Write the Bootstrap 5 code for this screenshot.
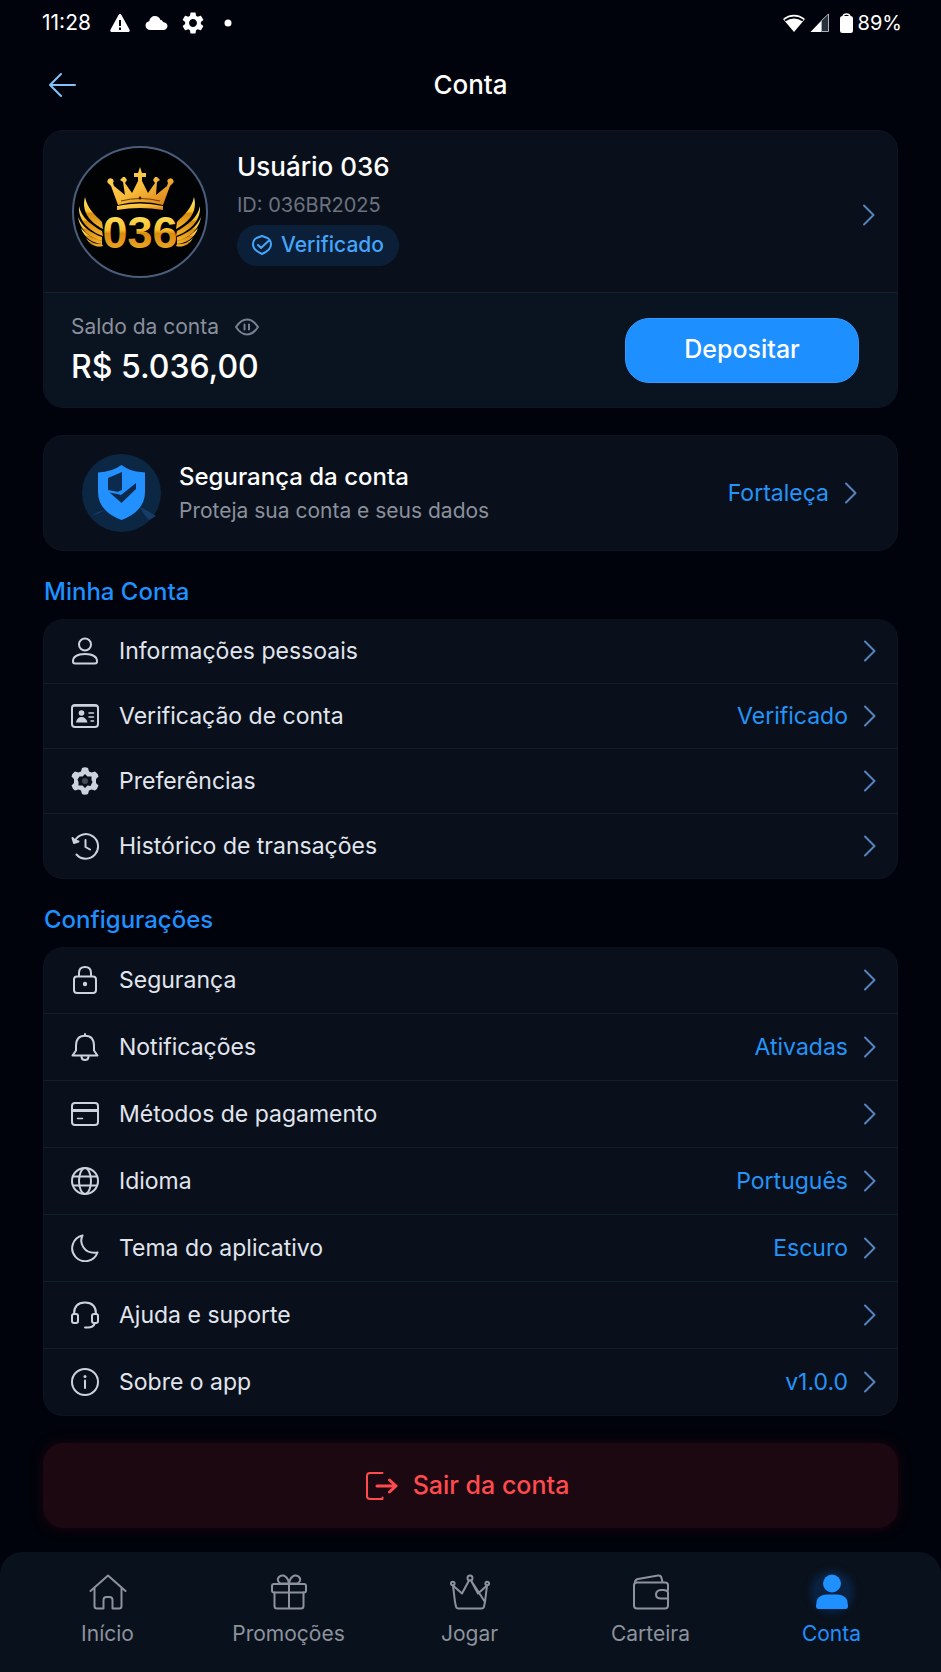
<!DOCTYPE html>
<html lang="pt-BR" data-bs-theme="dark">
<head>
    <meta charset="UTF-8">
    <meta name="viewport" content="width=device-width, initial-scale=1.0">
    <title>Conta</title>
    <link rel="stylesheet" href="https://cdn.jsdelivr.net/npm/bootstrap@5.3.0/dist/css/bootstrap.min.css">
    <style>
        :root {
            --app-bg: #00030b;
            --app-card: #09101b;
            --app-card-alt: #0a1420;
            --app-line: #131e2b;
            --app-blue: #1e90ff;
            --app-text: #e1e5ee;
            --app-muted: #8b909c;
        }

        body {
            background: var(--app-bg);
            color: #fff;
            font-family: Inter, "Liberation Sans", sans-serif;
            font-size: 23px;
            line-height: 28px;
        }

        svg {
            display: block;
            flex-shrink: 0;
        }

        .line-icon {
            fill: none;
            stroke: currentColor;
            stroke-width: 2;
            stroke-linecap: round;
            stroke-linejoin: round;
        }

        .status-bar {
            height: 44px;
            padding: 2px 39px 0 42px;
            font-size: 21px;
        }

        .status-icons {
            gap: 14px;
            margin-left: 18px;
        }

        .status-dot {
            margin-left: 6px;
        }

        .battery-text {
            font-size: 20px;
            margin-left: 5px;
        }

        .battery-icon {
            margin-left: 10px;
        }

        .top-bar {
            display: grid;
            grid-template-columns: 1fr auto 1fr;
            height: 80px;
            padding: 2px 46px 0;
        }

        .back-link {
            color: #82c4f8;
            justify-self: start;
        }

        .screen-title {
            font-size: 26px;
            font-weight: 500;
        }

        .app-main {
            padding: 6px 43px 24px;
        }

        .panel {
            background: var(--app-card);
            border: 1px solid #0c1521;
            border-radius: 20px;
            overflow: hidden;
        }

        .profile-row {
            color: #fff;
            padding: 15px 22px 14px 28px;
            border-bottom: 1px solid #15212e;
        }

        .profile-row .chevron {
            margin-top: 6px;
        }

        .profile-info {
            margin: 5px 0 0 29px;
        }

        .item-title {
            font-size: 24px;
            font-weight: 500;
            line-height: 32px;
        }

        .profile-info .item-title {
            font-size: 26px;
        }

        .user-id {
            color: #6c7280;
            font-size: 20px;
            margin: 8px 0 6px;
        }

        .verified-pill {
            background: #0b2038;
            color: #44a5fb;
            border-radius: 21px;
            padding: 6px 15px 7px;
            font-weight: 500;
            font-size: 21px;
            gap: 9px;
        }

        .balance-row {
            background: var(--app-card-alt);
            padding: 20px 38px 20px 27px;
        }

        .soft-text {
            color: var(--app-muted);
            font-size: 21px;
        }

        .balance-value {
            font-size: 32px;
            font-weight: 500;
            line-height: 40px;
            margin-top: 6px;
        }

        .eye-btn {
            background: none;
            border: 0;
            padding: 0;
            color: #77808f;
        }

        .deposit-btn {
            --bs-btn-bg: #1e8fff;
            --bs-btn-border-color: #2f9bff;
            --bs-btn-color: #fff;
            --bs-btn-hover-bg: #3a9eff;
            --bs-btn-hover-color: #fff;
            --bs-btn-border-radius: 24px;
            --bs-btn-font-size: 25px;
            --bs-btn-font-weight: 500;
            min-width: 234px;
            min-height: 65px;
        }

        .security-card {
            color: #fff;
            margin-top: 27px;
            padding: 18px 40px 18px 38px;
        }

        .security-text {
            margin-left: 18px;
        }

        .blue-text {
            color: #2494f8;
        }

        .chevron {
            color: #5683bd;
            width: 13px;
            height: 22px;
        }

        .section-title {
            color: var(--app-blue);
            font-size: 24px;
            font-weight: 500;
            line-height: 30px;
            margin: 26px 0 12px 1px;
        }

        .menu-list {
            --bs-list-group-bg: var(--app-card);
            --bs-list-group-border-color: var(--app-line);
            --bs-list-group-border-radius: 20px;
        }

        .menu-list .list-group-item {
            display: flex;
            align-items: center;
            min-height: 65px;
            padding: 0 21px 0 27px;
            border-width: 0 1px 1px;
            border-left-color: #0c1521;
            border-right-color: #0c1521;
        }

        .menu-list .list-group-item:hover {
            background: #0d1724;
        }

        .menu-list .list-group-item:last-child {
            border-bottom-color: #0c1521;
        }

        .menu-list.roomy .list-group-item {
            min-height: 67px;
        }

        .menu-icon {
            color: #cdd2df;
        }

        .menu-label {
            color: var(--app-text);
            margin-left: 20px;
        }

        .row-end {
            gap: 15px;
        }

        .logout-btn {
            --bs-btn-bg: #1b0810;
            --bs-btn-border-color: #1b0810;
            --bs-btn-color: #ff4b4f;
            --bs-btn-hover-bg: #270b14;
            --bs-btn-hover-color: #ff4b4f;
            --bs-btn-border-radius: 20px;
            --bs-btn-font-size: 25px;
            --bs-btn-font-weight: 500;
            min-height: 85px;
            margin-top: 27px;
            padding-right: 19px;
            gap: 15px;
            box-shadow: 0 0 12px rgba(60, 8, 20, .5);
        }

        .tab-bar {
            background: #09111c;
            border-radius: 22px 22px 0 0;
            padding: 22px 19px 24px 17px;
        }

        .tab-link {
            display: flex;
            flex-direction: column;
            align-items: center;
            gap: 10px;
            color: #8d929d;
            font-size: 21px;
            text-decoration: none;
        }

        .tab-link.active {
            color: var(--app-blue);
        }

        .tab-link.active svg {
            overflow: visible;
            border-radius: 50%;
            background: #0a2240;
            box-shadow: 0 0 6px 4px #0a2240;
        }
    </style>
</head>
<body>
    <svg width="0" height="0" class="position-absolute" aria-hidden="true">
        <symbol id="i-chevron" viewBox="0 0 13 22">
            <path d="M2 1.500L11.500 11L2 20.500"/>
        </symbol>
        <symbol id="i-gear" viewBox="0 0 24 24">
            <path fill-rule="evenodd" d="M19.140 12.940c.04-.3.06-.61.06-.94 0-.32-.02-.64-.07-.94l2.030-1.580c.18-.14.23-.41.12-.61l-1.920-3.320c-.12-.22-.37-.29-.59-.22l-2.390.96c-.5-.38-1.030-.7-1.620-.94l-.36-2.540c-.04-.24-.24-.41-.48-.41h-3.840c-.24 0-.43.17-.47.41l-.36 2.540c-.59.24-1.130.57-1.620.94l-2.390-.96c-.22-.08-.47 0-.59.22L2.740 8.870c-.12.21-.08.47.12.61l2.030 1.580c-.05.3-.09.63-.09.94s.02.64.07.94l-2.030 1.580c-.18.14-.23.41-.12.61l1.920 3.320c.12.22.37.29.59.22l2.390-.96c.5.38 1.030.7 1.620.94l.36 2.540c.05.24.24.41.48.41h3.840c.24 0 .44-.17.47-.41l.36-2.540c.59-.24 1.130-.56 1.620-.94l2.390.96c.22.08.47 0 .59-.22l1.920-3.320c.12-.22.07-.47-.12-.61l-2.010-1.580zM12 15.600c-1.980 0-3.600-1.620-3.600-3.600s1.620-3.600 3.600-3.600 3.600 1.620 3.600 3.600-1.620 3.600-3.600 3.600z"/>
        </symbol>
    </svg>

    <div class="d-flex flex-column min-vh-100">
        <div class="status-bar d-flex align-items-center justify-content-between">
            <div class="d-flex align-items-center">
                <span>11:28</span>
                <div class="status-icons d-flex align-items-center">
                    <svg width="22" height="20" viewBox="0 0 22 20" fill="#fff">
                        <path fill-rule="evenodd" d="M11 1Q12 1 12.600 2.200L20.700 17Q21 19 19.500 19H2.500Q1 19 1.300 17L9.400 2.200Q10 1 11 1ZM10 7V13H12V7ZM10 14.500V17H12V14.500Z"/>
                    </svg>
                    <svg width="23" height="16" viewBox="0 0 23 16" fill="#fff">
                        <path d="M5.500 15C2.500 15 .5 13 .5 10.500C.5 8 2.300 6.500 4.200 6.200C4.800 3 7 1 9.800 1C12.600 1 14.500 2.600 15.500 5C16.300 5 17.500 5.300 18 7C20.500 7.200 22.500 8.700 22.500 11C22.500 13.300 20.800 15 18.500 15Z"/>
                    </svg>
                    <svg width="22" height="22" viewBox="2 2 20 20" fill="#fff"><use href="#i-gear" width="24" height="24"/></svg>
                    <svg class="status-dot" width="8" height="8" viewBox="0 0 8 8" fill="#fff"><circle cx="4" cy="4" r="3.500"/></svg>
                </div>
            </div>
            <div class="d-flex align-items-center">
                <svg width="24" height="20" viewBox="0 0 24 20" fill="#fff">
                    <path d="M1 6C7 .3 17 .3 23 6L12 19Z"/>
                    <path d="M3 7.500C8.500 3.500 15.500 3.500 21 7.500" fill="none" stroke="#00030b" stroke-width="2"/>
                </svg>
                <svg class="ms-1" width="20" height="20" viewBox="0 0 20 20" fill="#fff">
                    <path d="M.5 19L11.500 7.500V19Z"/>
                    <path d="M11.500 7.500L18.500 1V18.500H11.500Z" fill="#28303b" stroke="#aab0b8" stroke-width="1"/>
                </svg>
                <svg class="battery-icon" width="13" height="20" viewBox="0 0 13 20" fill="#fff">
                    <rect x="0" y="3" width="13" height="17" rx="2.500"/>
                    <path d="M3 3.500Q3.500 1 6.500 1T10 3.500" fill="none" stroke="#fff" stroke-width="1.500"/>
                </svg>
                <span class="battery-text">89%</span>
            </div>
        </div>

        <header class="top-bar align-items-center">
            <a href="#" class="back-link" aria-label="Voltar">
                <svg class="line-icon" width="32" height="28" viewBox="0 0 32 28">
                    <path d="M4 14H29M15 3L4 14L15 25"/>
                </svg>
            </a>
            <h1 class="screen-title m-0">Conta</h1>
        </header>

        <main class="app-main">
            <section class="panel">
                <a href="#" class="profile-row d-flex align-items-center text-decoration-none">
                    <svg width="136" height="132" viewBox="0 0 136 132" role="img" aria-label="Logo 036">
                        <defs>
                            <linearGradient id="gold" x1="0" y1="0" x2="0" y2="1">
                                <stop offset="0" stop-color="#fff07a"/>
                                <stop offset=".45" stop-color="#f8c02a"/>
                                <stop offset=".52" stop-color="#d98a12"/>
                                <stop offset="1" stop-color="#f4b62b"/>
                            </linearGradient>
                            <linearGradient id="crownGold" x1="0" y1="0" x2="1" y2="1">
                                <stop offset="0" stop-color="#ffd85a"/>
                                <stop offset=".5" stop-color="#f9bd3b"/>
                                <stop offset="1" stop-color="#d87a16"/>
                            </linearGradient>
                            <g id="wing" fill="url(#gold)">
                                <path d="M13 51C15 62 23 69 30 76L31 83C18 76 9 66 13 51Z"/>
                                <path d="M7 60C9 71 19 79 30 85L31 90C17 85 6 75 7 60Z"/>
                                <path d="M6 71C10 81 19 87 30 91L30 95C18 92 8 84 6 71Z"/>
                                <path d="M9 82C15 89 21 92 30 95L30 98C21 97 12 92 9 82Z"/>
                                <path d="M14 92C19 97 24 98 30 98L31 100C25 102 18 99 14 92Z"/>
                            </g>
                        </defs>
                        <ellipse cx="68" cy="66" rx="67" ry="65" fill="#010204" stroke="#4a5d7a" stroke-width="2"/>
                        <path fill="url(#crownGold)" d="M46 59L39 40L37 38A3 3 0 1 1 41 37L42 40L53 49L51 36L48 34L51 31L53 31L55 34L53 37L60 47L66 35L66 31L62 31L62 27L66 27L68 21L70 27L74 27L74 31L70 31L70 35L76 47L83 37L81 34L83 31L85 31L88 34L85 36L84 49L95 40L96 37A3 3 0 1 1 100 38L98 40L91 59Q68 53 46 59Z"/>
                        <path fill="url(#crownGold)" d="M45 60Q68 55 91 60V64Q68 60 45 64Z"/>
                        <path d="M49 55Q68 50 88 55" fill="none" stroke="#6e3c07" stroke-width="1"/>
                        <path d="M68 50L69.500 52L68 54L66.500 52Z" fill="#2a1804"/>
                        <use href="#wing"/>
                        <use href="#wing" transform="translate(135 0) scale(-1 1)"/>
                        <text x="68" y="102" text-anchor="middle" fill="url(#gold)" font-family="Liberation Sans, sans-serif" font-weight="700" font-size="45">036</text>
                    </svg>
                    <div class="profile-info align-self-start">
                        <div class="item-title">Usuário 036</div>
                        <div class="user-id">ID: 036BR2025</div>
                        <span class="verified-pill d-inline-flex align-items-center">
                            <svg class="line-icon" width="20" height="22" viewBox="0 0 20 22">
                                <path d="M10 2L15.500 4Q19 6 19 10.500Q19 16 10 20Q1 16 1 10.500Q1 6 4.500 4ZM6 11L9 14L17 6.500"/>
                            </svg>
                            Verificado
                        </span>
                    </div>
                    <svg class="chevron line-icon ms-auto"><use href="#i-chevron"/></svg>
                </a>
                <div class="balance-row d-flex align-items-center justify-content-between">
                    <div>
                        <div class="d-flex align-items-center gap-3">
                            <span class="soft-text">Saldo da conta</span>
                            <button type="button" class="eye-btn" aria-label="Ocultar saldo">
                                <svg class="line-icon" width="24" height="18" viewBox="0 0 24 18">
                                    <path d="M1 9Q6 1.500 12 1.500T23 9Q18 16.500 12 16.500T1 9ZM9.500 6.500V11.500M14 6.500V11.500"/>
                                </svg>
                            </button>
                        </div>
                        <div class="balance-value">R$ 5.036,00</div>
                    </div>
                    <button type="button" class="btn deposit-btn">Depositar</button>
                </div>
            </section>

            <a href="#" class="panel security-card d-flex align-items-center text-decoration-none">
                <svg width="79" height="78" viewBox="0 0 79 78">
                    <ellipse cx="39.500" cy="39" rx="39.500" ry="39" fill="#0c2744"/>
                    <path d="M10 62Q15 57 24 56M58 53Q68 58 74 62L67 66Q61 60 58 53Z" fill="#153d68"/>
                    <path d="M39.500 11Q49 18 59 18L63 18.500V38Q63 57 39.500 66Q16 57 16 38V18.500Q30 18 39.500 11Z" fill="#2291ff"/>
                    <path d="M26 24L40 18V38L36 40L26 37Z" fill="#0b2a4d"/>
                    <path d="M27 38L39 41L54 29V35L39.500 49Z" fill="#0b2a4d"/>
                    <path d="M26 37L36 39L40 37" fill="none" stroke="#2291ff" stroke-width="2"/>
                </svg>
                <div class="security-text">
                    <div class="item-title">Segurança da conta</div>
                    <div class="soft-text mt-1">Proteja sua conta e seus dados</div>
                </div>
                <div class="row-end d-flex align-items-center ms-auto blue-text">
                    Fortaleça
                    <svg class="chevron line-icon"><use href="#i-chevron"/></svg>
                </div>
            </a>

            <h2 class="section-title">Minha Conta</h2>
            <div class="list-group menu-list">
                <a href="#" class="list-group-item">
                    <svg class="menu-icon line-icon" width="28" height="28" viewBox="0 0 28 28"><circle cx="14" cy="7.500" r="6"/><path d="M2 24.500Q2 17 14 17T26 24.500Q26 26.500 24 26.500H4Q2 26.500 2 24.500Z"/></svg>
                    <span class="menu-label">Informações pessoais</span>
                    <svg class="chevron line-icon ms-auto"><use href="#i-chevron"/></svg>
                </a>
                <a href="#" class="list-group-item">
                    <svg class="menu-icon line-icon" width="28" height="28" viewBox="0 0 28 28"><rect x="1" y="3" width="26" height="22" rx="3"/><path d="M2 4H26M18 11H22.500M18 15H22.500M20 19H22.500" stroke-width="1.500"/><circle cx="10.500" cy="11" r="2.800" fill="currentColor" stroke="none"/><path d="M5 20.500Q6 15 10.500 15T16.500 20.500Z" fill="currentColor" stroke="none"/></svg>
                    <span class="menu-label">Verificação de conta</span>
                    <span class="row-end d-flex align-items-center ms-auto blue-text">Verificado <svg class="chevron line-icon"><use href="#i-chevron"/></svg></span>
                </a>
                <a href="#" class="list-group-item">
                    <svg class="menu-icon" width="28" height="28" viewBox="0 0 28 28" fill="currentColor"><path d="M11 1Q14-.5 17 1L18 4.500L20.500 5.500L24 4.500Q26.500 6 27.500 9.500L25 12V16L27.500 18.500Q26.500 22 24 23.500L20.500 22.500L18 23.500L17 27Q14 28.500 11 27L10 23.500L7.500 22.500L4 23.500Q1.500 22 .5 18.500L3 16V12L.5 9.500Q1.500 6 4 4.500L7.500 5.500L10 4.500Z"/><path d="M14 7L16.500 9.500L20.500 9.500V13L21.500 15L19.500 19L16.500 18.500L14 21L11.500 18.500L7.500 18.500L7.500 15L6.500 12.500L8.500 9.500L11.500 9.500Z" fill="#09101b"/><circle cx="14" cy="14" r="3" fill="#434956"/></svg>
                    <span class="menu-label">Preferências</span>
                    <svg class="chevron line-icon ms-auto"><use href="#i-chevron"/></svg>
                </a>
                <a href="#" class="list-group-item">
                    <svg class="menu-icon line-icon" width="28" height="28" viewBox="0 0 28 28"><path d="M4 8.500A12.300 12.300 0 1 1 5.500 22.500M14.500 8V15L19 17.500"/><path d="M1.500 6L3 11L7.500 9.500L4 8.500Z" fill="currentColor"/></svg>
                    <span class="menu-label">Histórico de transações</span>
                    <svg class="chevron line-icon ms-auto"><use href="#i-chevron"/></svg>
                </a>
            </div>

            <h2 class="section-title">Configurações</h2>
            <div class="list-group menu-list roomy">
                <a href="#" class="list-group-item">
                    <svg class="menu-icon line-icon" width="28" height="28" viewBox="0 0 28 28"><rect x="3" y="10.500" width="22" height="16.500" rx="3"/><path d="M8 10V7Q8 1 14 1T20 7V10"/><circle cx="14" cy="18" r="2.200" fill="currentColor" stroke="none"/></svg>
                    <span class="menu-label">Segurança</span>
                    <svg class="chevron line-icon ms-auto"><use href="#i-chevron"/></svg>
                </a>
                <a href="#" class="list-group-item">
                    <svg class="menu-icon line-icon" width="28" height="28" viewBox="0 0 28 28"><path d="M14 1V2.500M5 13Q5 2.800 14 2.800T23 13V17.500L26.500 22.500H1.500L5 17.500ZM10.500 24Q11 27 14 27T17.500 24"/></svg>
                    <span class="menu-label">Notificações</span>
                    <span class="row-end d-flex align-items-center ms-auto blue-text">Ativadas <svg class="chevron line-icon"><use href="#i-chevron"/></svg></span>
                </a>
                <a href="#" class="list-group-item">
                    <svg class="menu-icon line-icon" width="28" height="28" viewBox="0 0 28 28"><rect x="1" y="3" width="26" height="22" rx="3"/><path d="M1 10.500H27" stroke-width="3"/><path d="M6.500 18.500H11.500" stroke-width="1.500"/></svg>
                    <span class="menu-label">Métodos de pagamento</span>
                    <svg class="chevron line-icon ms-auto"><use href="#i-chevron"/></svg>
                </a>
                <a href="#" class="list-group-item">
                    <svg class="menu-icon line-icon" width="28" height="28" viewBox="0 0 28 28"><circle cx="14" cy="14" r="13"/><ellipse cx="14" cy="14" rx="6" ry="13"/><path d="M2.500 9.500H25.500M2.500 18.500H25.500"/></svg>
                    <span class="menu-label">Idioma</span>
                    <span class="row-end d-flex align-items-center ms-auto blue-text">Português <svg class="chevron line-icon"><use href="#i-chevron"/></svg></span>
                </a>
                <a href="#" class="list-group-item">
                    <svg class="menu-icon line-icon" width="28" height="28" viewBox="0 0 28 28"><path d="M11.500 1.500A13 13 0 1 0 26.500 18.500Q17 20 12.500 13.500Q8.500 7.500 11.500 1.500Z"/></svg>
                    <span class="menu-label">Tema do aplicativo</span>
                    <span class="row-end d-flex align-items-center ms-auto blue-text">Escuro <svg class="chevron line-icon"><use href="#i-chevron"/></svg></span>
                </a>
                <a href="#" class="list-group-item">
                    <svg class="menu-icon line-icon" width="28" height="28" viewBox="0 0 28 28"><path d="M3 13Q3 1.500 14 1.500T25 13M23.500 23Q22 26.500 17 26.500H14"/><rect x="1" y="13" width="6" height="9" rx="2"/><rect x="21" y="13" width="6" height="9" rx="2"/></svg>
                    <span class="menu-label">Ajuda e suporte</span>
                    <svg class="chevron line-icon ms-auto"><use href="#i-chevron"/></svg>
                </a>
                <a href="#" class="list-group-item">
                    <svg class="menu-icon line-icon" width="28" height="28" viewBox="0 0 28 28"><circle cx="14" cy="14" r="13"/><path d="M14 12.500V20"/><circle cx="14" cy="8.500" r="1.500" fill="currentColor" stroke="none"/></svg>
                    <span class="menu-label">Sobre o app</span>
                    <span class="row-end d-flex align-items-center ms-auto blue-text">v1.0.0 <svg class="chevron line-icon"><use href="#i-chevron"/></svg></span>
                </a>
            </div>

            <button type="button" class="btn logout-btn w-100 d-flex align-items-center justify-content-center">
                <svg class="line-icon" width="33" height="30" viewBox="0 0 33 30">
                    <path d="M17.500 2H5Q2 2 2 5V25Q2 28 5 28H17.500V26.500"/>
                    <path d="M12 15H30M24.500 9L31 15L24.500 21" stroke-width="3"/>
                </svg>
                Sair da conta
            </button>
        </main>

        <nav class="tab-bar mt-auto">
            <div class="row g-0">
                <div class="col">
                    <a href="#" class="tab-link">
                        <svg class="line-icon" width="38" height="36" viewBox="0 0 38 36"><path d="M1.500 17L19 1.500L36.500 17M5.500 14V32Q5.500 34.500 8 34.500H14.500V26Q14.500 23 17.500 23H20.500Q23.500 23 23.500 26V34.500H30Q32.500 34.500 32.500 32V14"/></svg>
                        Início
                    </a>
                </div>
                <div class="col">
                    <a href="#" class="tab-link">
                        <svg class="line-icon" width="36" height="36" viewBox="0 0 36 36"><rect x="1" y="10" width="34" height="8.500" rx="2"/><path d="M3.500 18.500V32Q3.500 34.500 6 34.500H30Q32.500 34.500 32.500 32V18.500M18 10V34.500M18 9.500Q14 9.500 9.500 9.500Q6 7.500 7 4.500Q8.500 1 12.500 1.500Q17 3 18 9.500Q19 3 23.500 1.500Q27.500 1 29 4.500Q30 7.500 26.500 9.500Z"/></svg>
                        Promoções
                    </a>
                </div>
                <div class="col">
                    <a href="#" class="tab-link">
                        <svg class="line-icon" width="40" height="36" viewBox="0 0 40 36"><circle cx="20" cy="4" r="2.500"/><circle cx="2.800" cy="9.500" r="1.800"/><circle cx="37.200" cy="9.500" r="1.800"/><path d="M5 28L3 11.500L12 19.500L19 6.500M21 6.500L28 19.500L37 11.500L35 28ZM5 28L6 32.500Q6.500 34.500 8.500 34.500H31.500Q33.500 34.500 34 32.500L35 28"/></svg>
                        Jogar
                    </a>
                </div>
                <div class="col">
                    <a href="#" class="tab-link">
                        <svg class="line-icon" width="36" height="36" viewBox="0 0 36 36"><path d="M35 16V11Q35 8.500 32 8.500H4Q1 8.500 1 11V31.500Q1 34.500 4 34.500H32Q35 34.500 35 31.500V24.500M2 8.500Q2 5.500 5 5L25 1.500Q28 1 28.500 4L29.500 8M35 24.500H28Q23 24.500 23 20.500T28 16H30.500Q33.500 16 35 18Z"/></svg>
                        Carteira
                    </a>
                </div>
                <div class="col">
                    <a href="#" class="tab-link active" aria-current="page">
                        <svg width="36" height="36" viewBox="0 0 36 36" fill="currentColor"><circle cx="18" cy="9.500" r="9"/><path d="M2 32Q2 21 12 20.500H24Q34 21 34 32Q34 35 31.500 35H4.500Q2 35 2 32Z"/></svg>
                        Conta
                    </a>
                </div>
            </div>
        </nav>
    </div>

    <script src="https://cdn.jsdelivr.net/npm/bootstrap@5.3.0/dist/js/bootstrap.bundle.min.js"></script>
</body>
</html>
